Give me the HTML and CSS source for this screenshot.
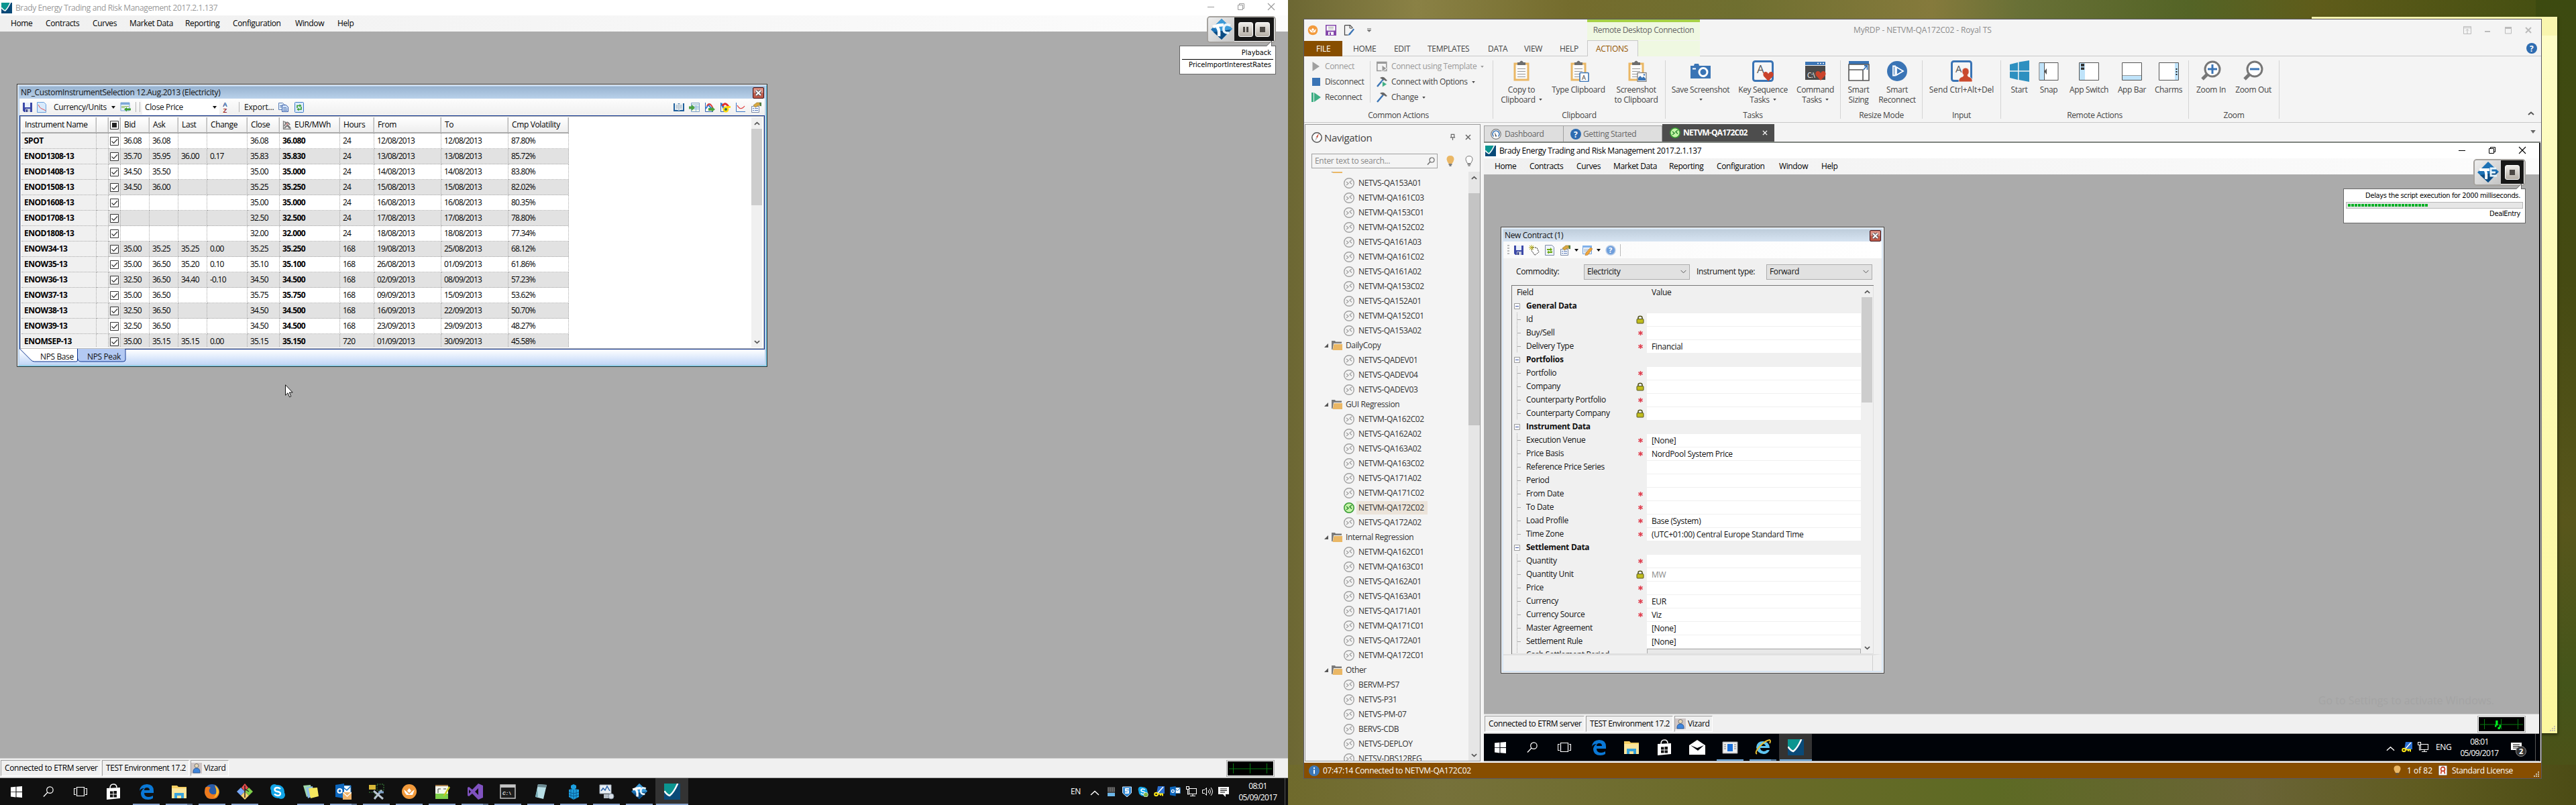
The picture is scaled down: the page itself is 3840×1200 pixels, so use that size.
FILE: index.html
```html
<!DOCTYPE html>
<html lang="en">
<head>
<meta charset="utf-8">
<title>Brady Energy Trading and Risk Management</title>
<link rel="stylesheet" href="styles.css">
</head>
<body>
<svg class="sprite" xmlns="http://www.w3.org/2000/svg">
<symbol id="brady" viewBox="0 0 16 16"><path d="M0 0h16v16H0z" fill="#0a4a78"/><path d="M0 0h13L6 12Q2 11 0 7.500z" fill="#0b9590"/><path d="M.3 7.500Q3 11.500 5.500 12 9.500 9 13.500 0" fill="none" stroke="#fff" stroke-width="1.600"/></symbol>
<symbol id="min" viewBox="0 0 12 12"><path d="M1 6.500h10" stroke="currentColor" fill="none"/></symbol>
<symbol id="max" viewBox="0 0 12 12"><path d="M1.500 3.500h7v7h-7zM3.500 3.500v-2h7v7h-2" stroke="currentColor" fill="none"/></symbol>
<symbol id="cls" viewBox="0 0 12 12"><path d="M1 1l10 10M11 1L1 11" stroke="currentColor" fill="none" stroke-width="1.100"/></symbol>
<symbol id="redx" viewBox="0 0 17 17"><rect x=".5" y=".5" width="16" height="16" rx="1.500" fill="#bd5a4a" stroke="#43161c"/><rect x="1.500" y="1.500" width="14" height="7" fill="#dc9588"/><path d="M5 5l7 7M12 5l-7 7" stroke="#4c4c55" stroke-width="4"/><path d="M5 5l7 7M12 5l-7 7" stroke="#fff" stroke-width="2.200"/></symbol>
<symbol id="save" viewBox="0 0 16 16"><path d="M1 1h14v14H3l-2-2z" fill="#3c49a8"/><path d="M4 1h8v7H4z" fill="#e9effa"/><path d="M5 10h7v5H5z" fill="#c8cede"/><path d="M6 11h2v4H6z" fill="#29327c"/></symbol>
<symbol id="curvedoc" viewBox="0 0 16 16"><path d="M1.500.5h10l3 3v12h-13z" fill="#d8eafc" stroke="#6ba0dc"/><path d="M3 4q2 5 5 6t6 3" stroke="#e45050" fill="none"/></symbol>
<symbol id="gridarrow" viewBox="0 0 16 16"><path d="M1 1h13v12H1z" fill="#eaf3fd" stroke="#7da7d8"/><path d="M1 1h13v3H1z" fill="#7da7d8"/><path d="M2 6.500h11M2 8.500h5" stroke="#8bb54f"/><path d="M6 11l4-3.500v2h6v3h-6v2z" fill="#3d9c31"/></symbol>
<symbol id="az" viewBox="0 0 10 18"><text x="1" y="8" font-family="Liberation Sans" font-weight="bold" font-size="9.500" fill="#2c5aa0">A</text><text x="1.500" y="17" font-family="Liberation Sans" font-weight="bold" font-size="9.500" fill="#9c2b2b">Z</text></symbol>
<symbol id="copy" viewBox="0 0 16 16"><path d="M1.500 1.500h6l2 2v8h-8z" fill="#e3effc" stroke="#5e7fb5"/><path d="M6.500 4.500h6l3 3v7h-9z" fill="#cfe1fa" stroke="#3b5fa8"/><path d="M8 8.500h5M8 10.500h6M8 12.500h6M3 5.500h3M3 7.500h3" stroke="#5e7fb5"/></symbol>
<symbol id="refresh" viewBox="0 0 16 16"><rect x="1.500" y=".5" width="13" height="15" rx="1" fill="#dcebfb" stroke="#3f7cc9"/><path d="M5 9V5.500h4M11 7v4H7" fill="none" stroke="#3a9d31" stroke-width="1.600"/><path d="M8.500 3l3 2.500-3 2.500zM7.500 8.500l-3 2.500 3 2.500z" fill="#3a9d31"/></symbol>
<symbol id="book" viewBox="0 0 16 16"><path d="M0 2h16v12H0z" fill="#1f5f9c"/><path d="M2 2q3-1 6 1 3-2 6-1v10q-3-1-6 1-3-2-6-1z" fill="#eef4f8"/><path d="M8 3v10M3.500 5h3M3.500 7h3M3.500 9h3M9.500 5h3M9.500 7h3M9.500 9h3" stroke="#8ca3b5"/></symbol>
<symbol id="gridin" viewBox="0 0 16 16"><path d="M3.500 1.500h12v13h-12z" fill="#f3f9ee" stroke="#7d9fc9"/><path d="M3.500 4h12M5 6.500h10M5 8.500h10M5 10.500h10M10.500 5v9" stroke="#8fb6df"/><path d="M0 6.500h4V4l5 4.500L4 13v-2.500H0z" fill="#4ba13f"/></symbol>
<symbol id="charta" viewBox="0 0 16 16"><path d="M1.500 1v13.500H13" stroke="#2f62b5" fill="none"/><path d="M2 10l4-6 3 4 4 4" stroke="#2f7bd0" stroke-width="2" fill="none"/><path d="M4 6q3-6 7 0l3 6" stroke="#e03a3a" stroke-width="2" fill="none"/><path d="M6 9h5V7l5 4-5 4v-2H6z" fill="#4ba13f"/></symbol>
<symbol id="chartb" viewBox="0 0 16 16"><path d="M1.500 1v13.500H7" stroke="#2f62b5" fill="none"/><path d="M2 2l5 9" stroke="#2f7bd0" stroke-width="3"/><path d="M4 6q4-7 9 1" stroke="#e23030" stroke-width="3" fill="none"/><circle cx="9" cy="11" r="3.200" fill="#2a7a4a" stroke="#ffd90f" stroke-width="2.500"/><path d="M10 6h6v3h-6z" fill="#ffd90f"/></symbol>
<symbol id="chartc" viewBox="0 0 16 16"><path d="M1.500 1v13.500H15" stroke="#3b78c9" fill="none"/><path d="M3 5q5 9 11 1" stroke="#e03a3a" fill="none" stroke-width="1.200"/></symbol>
<symbol id="props" viewBox="0 0 16 16"><path d="M1.500 6.500h11v9h-11z" fill="#f4f7fc" stroke="#7e8ca8"/><path d="M3 9.500h2M6 9.500h5M3 12.500h2M6 12.500h5" stroke="#5b7ab8"/><path d="M4 5l5-4h7v5l-4-1-5 3z" fill="#d8a840" stroke="#8a7030" stroke-width=".6"/><path d="M13 1h3v5h-2z" fill="#4b7a40"/></symbol>
<symbol id="chk" viewBox="0 0 13 13"><path d="M.5.5h12v12H.5z" fill="#fff" stroke="#333"/><path d="M2.500 6.500l3 3 5.500-6" fill="none" stroke="#333" stroke-width="1.200"/></symbol>
<symbol id="chksq" viewBox="0 0 13 13"><path d="M.5.5h12v12H.5z" fill="#fff" stroke="#333"/><path d="M3 3h7v7H3z" fill="#222"/></symbol>
<symbol id="graychart" viewBox="0 0 13 13"><path d="M1.500 0v12.500H13" stroke="#777" fill="none" stroke-width="1.300"/><path d="M3 1l9 10M3 8q3-10 8-2M3 11l4-4 4 4" stroke="#777" fill="none" stroke-width="1.800"/><circle cx="7" cy="5" r="1.500" fill="#d78a8a"/></symbol>
<symbol id="cursor" viewBox="0 0 12 20"><path d="M.5.7v15.500l3.500-3.400 2.600 6 2.300-1-2.600-5.800h4.900z" fill="#fff" stroke="#111"/></symbol>
<symbol id="up" viewBox="0 0 10 6"><path d="M1 5l4-3.500L9 5" fill="none" stroke="#555" stroke-width="1.900"/></symbol>
<symbol id="dn" viewBox="0 0 10 6"><path d="M1 1l4 3.500L9 1" fill="none" stroke="#555" stroke-width="1.900"/></symbol>
<symbol id="tri" viewBox="0 0 6 4"><path d="M0 0h6L3 4z" fill="currentColor"/></symbol>
<symbol id="tc" viewBox="0 0 32 32"><path d="M16 0l16 15-16 16L0 16z" fill="#1c71b5"/><path d="M16 0l16 15-12 12L4 12z" fill="#3c9bd8"/><path d="M16 18l14-2-14 15L4 20z" fill="#0c4c83"/><path d="M3 12q8-3 16-3M9 12q4 3 3 14" fill="none" stroke="#fff" stroke-width="4.500"/><path d="M29 10q-9-4-10 4t8 7" fill="none" stroke="#e8f5fc" stroke-width="3.600"/></symbol>
<symbol id="te" viewBox="0 0 32 32"><path d="M16 0l16 15-16 16L0 16z" fill="#1c71b5"/><path d="M16 18l14-2-14 15L4 20z" fill="#0c4c83"/><path d="M3 12h15M11 12q3 3 2 14" fill="none" stroke="#fff" stroke-width="4"/><path d="M28 10h-8v11h9M20 16h7" fill="none" stroke="#e8f5fc" stroke-width="2.800"/></symbol>
<symbol id="user" viewBox="0 0 16 16"><path d="M0 0h16v16H0z" fill="#cfc6c6"/><circle cx="8" cy="4.500" r="3" fill="#e8d9b8" stroke="#777"/><path d="M3 15q-.5-7 5-7t5 7z" fill="#3f86dc" stroke="#2d5c9c"/></symbol>
<symbol id="win" viewBox="0 0 16 16"><path d="M0 1.500l7-.8v7H0zM8 .6L16 0v7.600H8zM0 8.500h7v7l-7-.8zM8 8.500h8V16l-8-.8z" fill="#fff"/></symbol>
<symbol id="search" viewBox="0 0 18 18"><circle cx="11" cy="6.500" r="5" fill="none" stroke="#fff" stroke-width="1.300"/><path d="M7.500 10L1 17" stroke="#fff" stroke-width="1.400"/></symbol>
<symbol id="tview" viewBox="0 0 20 16"><path d="M4.500 1.500h11v13h-11zM3 3.500H.5v9H3M17 3.500h2.500v9H17" fill="none" stroke="#fff" stroke-width="1.200"/></symbol>
<symbol id="store" viewBox="0 0 24 24"><path d="M2 7l20-1v16L2 24z" fill="#fff"/><path d="M7 7q0-6 5-6t5 5" stroke="#fff" fill="none" stroke-width="1.500"/><path d="M7 11.500h4.500v4H7zM12.500 11H17v4.500h-4.500zM7 16.500h4.500v4H7zM12.500 16.500H17v4h-4.500z" fill="#111"/></symbol>
<symbol id="edge" viewBox="0 0 24 24"><path d="M2 11Q3 1 13 1q10 0 10 10v3H9q0 6 7 6 3 0 6-2v4q-3 2-7 2Q4 24 4 14 5 9 9 7 4 7 2 11zm7-1h8q0-4-4-4t-4 4z" fill="#0a78d6"/></symbol>
<symbol id="folder" viewBox="0 0 24 24"><path d="M1 3h8l2 2h12v17H1z" fill="#f6cf62"/><path d="M1 7h22v15H1z" fill="#fce69c"/><path d="M5 22v-8h14v8h-4v-4H9v4z" fill="#38a3dc"/></symbol>
<symbol id="firefox" viewBox="0 0 24 24"><circle cx="12" cy="12" r="11" fill="#2a5ca8"/><path d="M2 6q4-3 8 0-4 4-1 8 4 4 9 1 2-5-2-11 7 3 7 9-1 10-11 10T1 13z" fill="#ee7a1c"/><path d="M16 2q6 4 6 11-2 7-8 8 8-6 2-19z" fill="#fbc02d"/></symbol>
<symbol id="git" viewBox="0 0 24 24"><path d="M12 0l5 6-5 6-5-6z" fill="#ee4e4e"/><path d="M6 6l6 6-6 6-6-6z" fill="#78a8f8"/><path d="M18 6l6 6-6 6-6-6z" fill="#7ed04a"/><path d="M12 12l6 6-6 6-6-6z" fill="#f7d070"/><path d="M12 3v18M12 8l6 4" stroke="#222" stroke-width="1.500"/></symbol>
<symbol id="skype" viewBox="0 0 24 24"><circle cx="12" cy="12" r="10" fill="#12a5e8"/><circle cx="7" cy="7" r="6" fill="#12a5e8"/><circle cx="17" cy="17" r="6" fill="#12a5e8"/><path d="M16 8q-2-2-5-2-3.500.5-3.500 3t4 3q5 .8 4.500 3.500-.5 2.500-4 2.500-3.500-.3-5-2.500" fill="none" stroke="#fff" stroke-width="2.400"/></symbol>
<symbol id="notes" viewBox="0 0 24 24"><path d="M1 3l11-1 2 14-8 4z" fill="#9fd8a8"/><path d="M5 6l10-2 2 14-9 4z" fill="#8fc0ea"/><path d="M9 7l13-1 2 13-12 3z" fill="#f6e85e"/></symbol>
<symbol id="outlook" viewBox="0 0 24 24"><path d="M10 3h13v13H10z" fill="#fff" stroke="#0f6fc6"/><path d="M12 6l5 4 6-6" fill="none" stroke="#0f6fc6" stroke-width="1.500"/><path d="M0 2l13-2v22L0 20z" fill="#0c66bd"/><circle cx="6.500" cy="11" r="3" fill="none" stroke="#fff" stroke-width="2"/></symbol>
<symbol id="outlookm" viewBox="0 0 24 24"><use href="#outlook"/><path d="M11 13h13v11H11z" fill="#efb36a"/><path d="M11 13l6.500 6 6.500-6" stroke="#fff" fill="none" stroke-width="1.300"/></symbol>
<symbol id="tools" viewBox="0 0 24 24"><path d="M1 2h10v7H1z" fill="#d8b838"/><path d="M13 1h10v9H13zM1 13h9v9" fill="none" stroke="#3e8f3e" stroke-dasharray="2 1.500"/><path d="M8 11l14 12M20 10L9 23" stroke="#b8c4d0" stroke-width="3"/><path d="M15 13h8" stroke="#7da0c8" stroke-width="3"/></symbol>
<symbol id="royal" viewBox="0 0 24 24"><circle cx="12" cy="12" r="11" fill="#f29a3c"/><path d="M4 9l4 3 4-5 4 5 4-3-3 8H8q-3-3-4-8z" fill="#fff"/><path d="M8 11l4 4 4-4" stroke="#f29a3c" fill="none" stroke-width="1.500"/></symbol>
<symbol id="npp" viewBox="0 0 24 24"><path d="M2 3h19v20H2z" fill="#f5f8ee"/><path d="M2 15h19v8H2z" fill="#7ed04a"/><path d="M2 2h19v2H2z" fill="#a07848"/><path d="M6 8v6M6 8h4M14 8h4" stroke="#444"/><path d="M22 4l-7 12-2 4 4-3L24 6z" fill="#c8c820"/></symbol>
<symbol id="vs" viewBox="0 0 24 24"><path d="M17 0l7 3v18l-7 3-9-9-5 4-2-1V6l2-1 5 4zm0 7l-5 5 5 5zM3 9v6l3-3z" fill="#8052c0"/></symbol>
<symbol id="cmd" viewBox="0 0 24 24"><path d="M1 2h22v20H1z" fill="#1d1d1d" stroke="#c4c4c4" stroke-width="1.500"/><path d="M1 2h22v4H1z" fill="#c4c4c4"/><text x="4" y="17" font-family="Liberation Mono" font-weight="bold" font-size="8" fill="#ddd">C:\</text></symbol>
<symbol id="notebook" viewBox="0 0 24 24"><path d="M8 1l13 1-5 21-12-3z" fill="#b8dfe6"/><path d="M8 1l13 1-1 4L7 5z" fill="#6d8b93"/><path d="M4 20l3-12 1 12z" fill="#75aab4"/></symbol>
<symbol id="cubes" viewBox="0 0 24 24"><path d="M12 1l4 2v4l-4 2-4-2V3zM5 9l7-1 8 1v11l-8 4-7-4z" fill="#1da0e0"/><path d="M12 9v15M8 8v14M16 8v14M5 13l7 2 8-2M5 17l7 2 8-2" stroke="#0d5c94" fill="none"/></symbol>
<symbol id="perf" viewBox="0 0 24 24"><path d="M2 2h17v13H2z" fill="#e8eef4" stroke="#9aa5b0"/><path d="M4 11l3-4 3 3 3-6 4 7" stroke="#2a62a8" fill="none" stroke-width="1.500"/><path d="M8 16h9v6H8z" fill="#b4bcc4"/><circle cx="19" cy="19" r="4" fill="#d8dee6" stroke="#8090a0"/></symbol>
<symbol id="mail" viewBox="0 0 24 24"><path d="M0 9l12-8 12 8v14H0z" fill="#fff"/><path d="M2 9l10 4 10-4-9 8z" fill="#000308"/></symbol>
<symbol id="appwin" viewBox="0 0 24 24"><path d="M1 4h22v17H1z" fill="#eee" stroke="#999"/><path d="M8 7h8v11H8z" fill="#1a6fd8"/><path d="M3 8h3M3 11h3M3 14h3M18 8h3M18 11h3M18 14h3" stroke="#777"/></symbol>
<symbol id="ie" viewBox="0 0 24 24"><path d="M2 12Q3 3 12 3t10 10H8q0 4 5 5 3 0 5-2h4q-3 6-9 6Q3 21 2 12zm6-2h8q-.5-3-4-3t-4 3z" fill="#5fc4f0"/><path d="M3 22q-4-2 4-11T22 1q2 1 0 5" fill="none" stroke="#e9bf30" stroke-width="1.900"/></symbol>
<symbol id="chev" viewBox="0 0 14 8"><path d="M1 7l6-5.500L13 7" fill="none" stroke="#fff" stroke-width="1.400"/></symbol>
<symbol id="tower" viewBox="0 0 16 16"><path d="M3 1h11v9H3z" fill="#444"/><path d="M3 3h11M3 5h11M3 7h11" stroke="#888" stroke-dasharray="2 1"/><path d="M3 10h11v5H3z" fill="#6db8ea"/></symbol>
<symbol id="shield" viewBox="0 0 16 16"><path d="M1.500 1h13v9l-6.500 6-6.500-6z" fill="#2f86d2" stroke="#d4ebff"/><path d="M11 4H6v3h4v3H5" fill="none" stroke="#fff" stroke-width="1.800"/></symbol>
<symbol id="skypeok" viewBox="0 0 24 24"><use href="#skype"/><circle cx="18" cy="19" r="5" fill="#7cb342" stroke="#fff"/></symbol>
<symbol id="key" viewBox="0 0 16 16"><path d="M6 0h10v11H4z" fill="#2a6fd0"/><path d="M14 1L6 10" stroke="#fff" stroke-width="1.500"/><circle cx="3.500" cy="12" r="2.300" fill="none" stroke="#ffe818" stroke-width="2"/><path d="M6 11.500h7v3M10 11v3" stroke="#ffe818" stroke-width="2" fill="none"/></symbol>
<symbol id="net" viewBox="0 0 16 16"><path d="M4.500 3.500h11v8h-11zM10 12v3M6 14.500h8M.5.5h4v4h-4zM2.500 5v7h2" fill="none" stroke="#fff" stroke-width="1.100"/></symbol>
<symbol id="vol" viewBox="0 0 16 16"><path d="M.5 5.500h3l3-3v11l-3-3h-3zM9 6q1.500 2 0 4M11 4q3 4 0 8M13 2q5 6 0 12" fill="none" stroke="#fff"/></symbol>
<symbol id="msg" viewBox="0 0 16 16"><path d="M0 1h16v11h-5v4l-4-4H0z" fill="#fff"/><path d="M3 4h10M3 6.500h10M3 9h7" stroke="#111" stroke-width="1.200"/></symbol>
<symbol id="mon" viewBox="0 0 64 20"><path d="M0 10h64M6.500 2v15M31.500 2v15M56.500 2v15" stroke="#067a10" fill="none"/></symbol>
<symbol id="blip" viewBox="0 0 8 12"><path d="M0 6h1V0h3v9h2V6h2v4H7v2H4V7H2v2H0z" fill="#00f020"/></symbol>
<symbol id="rdp" viewBox="0 0 16 16"><circle cx="8" cy="8" r="7.300" fill="#f4f4f4" stroke="#a0a0a0" stroke-width="1.400"/><path d="M4 6l3 2.500L4 11M12 4L9 6.500 12 9.500" fill="none" stroke="#a0a0a0" stroke-width="1.300"/></symbol>
<symbol id="rdpg" viewBox="0 0 16 16"><circle cx="8" cy="8" r="7.200" fill="#c5f5a8" stroke="#3a9b35" stroke-width="1.600"/><path d="M4 6l3 2.500L4 11M12 4L9 6.500 12 9.500" fill="none" stroke="#2d8a32" stroke-width="1.500"/></symbol>
<symbol id="fold" viewBox="0 0 16 16"><path d="M0 1h5l1 1.500h9V5H3L1.500 14H0z" fill="#7a7a7a"/><path d="M3.500 6H16v9H1.500z" fill="#eab765"/></symbol>
<symbol id="exp" viewBox="0 0 6 6"><path d="M6 0v6H0z" fill="#555"/></symbol>
<symbol id="clip" viewBox="0 0 32 32"><path d="M6 5h20v24H6z" fill="#fafafa" stroke="#eab765" stroke-width="3"/><path d="M10 3h3q3-5 6 0h3v4H10z" fill="#6d6d6d"/><path d="M10 12.500h12M10 16.500h12M10 20.500h12M10 24.500h12" stroke="#999"/></symbol>
<symbol id="clipA" viewBox="0 0 32 32"><use href="#clip"/><rect x="18" y="18.500" width="13" height="13" rx="1" fill="#fff" stroke="#3a74b5" stroke-width="1.600"/><text x="21" y="28.500" font-family="Open Sans" font-size="9.500" fill="#333">A</text></symbol>
<symbol id="clipS" viewBox="0 0 32 32"><use href="#clip"/><rect x="18" y="18.500" width="13" height="13" fill="#fff" stroke="#777" stroke-width="1.200"/><path d="M19 30v-4l3-3 3 3 2-2 3 3v3z" fill="#3a74b5"/><circle cx="28" cy="21.500" r="1.300" fill="#3a74b5"/></symbol>
<symbol id="camera" viewBox="0 0 32 32"><path d="M1 8h5l1-3h6l1 3h17v19H1z" fill="#3a74b5"/><circle cx="20" cy="17.500" r="6" fill="none" stroke="#fff" stroke-width="3"/><path d="M4 12.500h5" stroke="#fff" stroke-width="2"/></symbol>
<symbol id="heart" viewBox="0 0 16 14"><path d="M8 14L1 6.500Q-1 1.500 3.500 0 6.500-.2 8 3 9.500-.2 12.500 0 17 1.500 15 6.500z" fill="#ca432b"/></symbol>
<symbol id="keyseq" viewBox="0 0 32 32"><rect x="1.500" y="1.500" width="29" height="29" rx="3" fill="#f6f6f6" stroke="#3a74b5" stroke-width="3"/><text x="7" y="19" font-family="Open Sans" font-size="17" fill="#555">A</text><use href="#heart" x="16" y="17" width="16" height="14"/></symbol>
<symbol id="command" viewBox="0 0 32 32"><path d="M1 2h30v5H1z" fill="#3a74b5"/><path d="M1 8h30v21H1z" fill="#4a4a4a"/><path d="M19 4.500h2M23 4.500h2M27 4.500h2" stroke="#fff" stroke-width="1.500"/><text x="4" y="26" font-family="Open Sans" font-size="10" fill="#fff">C:\</text><use href="#heart" x="16" y="16" width="16" height="14"/></symbol>
<symbol id="sizing" viewBox="0 0 32 32"><path d="M1 1h30v5H1z" fill="#3a74b5"/><path d="M1 6h30v24H1zM1 14h21v16" fill="#fff" stroke="#555" stroke-width="1.600"/><path d="M23 14l5-6M24 8h4.500v6" stroke="#3a74b5" stroke-width="1.800" fill="none"/></symbol>
<symbol id="reconn" viewBox="0 0 32 32"><circle cx="16" cy="16" r="15" fill="#3a74b5"/><path d="M10 8.500h3v14h-3zM15 10l10 6-10 6z" fill="#3a74b5" stroke="#fff" stroke-width="1.800"/></symbol>
<symbol id="cad" viewBox="0 0 32 32"><rect x="1.500" y="1.500" width="29" height="29" rx="3" fill="#f6f6f6" stroke="#3a74b5" stroke-width="3"/><text x="7" y="18" font-family="Open Sans" font-size="15" fill="#555">A</text><path d="M12 32q-1-6 6-8l1-2q-3-3-2-7 1-4 5-4t5 4q1 4-2 7l1 2q7 2 6 8z" fill="#ca4a2e" stroke="#f6f6f6" stroke-width=".8"/></symbol>
<symbol id="start" viewBox="0 0 32 32"><path d="M2 6l12-3v12.300H2zM15.500 2.500L31 0v15.300H15.500zM2 16.800h12V29L2 26zM15.500 16.800H31V32l-15.500-3z" fill="#2e90c0"/></symbol>
<symbol id="snap" viewBox="0 0 32 32"><path d="M2 3.500h28v26H2z" fill="#fff" stroke="#555"/><path d="M2.500 4h6.500v25H2.500z" fill="#bfe3fa"/><path d="M9.500 4v25" stroke="#555"/><path d="M13 12v9l-4-4.500z" fill="#555"/></symbol>
<symbol id="aswitch" viewBox="0 0 32 32"><path d="M1.500 3.500h29v26h-29z" fill="#fff" stroke="#555"/><path d="M2 4h8v25H2z" fill="#bfe3fa"/><path d="M4 5h5v4H4zM4 10.500h5v3.500H4z" fill="#333"/></symbol>
<symbol id="abar" viewBox="0 0 32 32"><path d="M1.500 3.500h29v26h-29z" fill="#fff" stroke="#555"/><path d="M2 23h28v6H2z" fill="#bfe3fa"/><path d="M2 22.500h28" stroke="#999"/></symbol>
<symbol id="charms" viewBox="0 0 32 32"><path d="M1.500 3.500h29v26h-29z" fill="#fff" stroke="#555"/><path d="M25 4h5v25h-5z" fill="#bfe3fa"/><path d="M26.500 12h2v2h-2zM26.500 16h2v2h-2zM26.500 20h2v2h-2z" fill="#222"/></symbol>
<symbol id="zin" viewBox="0 0 32 32"><path d="M10 21L3 28" stroke="#777" stroke-width="5"/><circle cx="18" cy="13" r="11" fill="#fff" stroke="#777" stroke-width="3"/><path d="M18 6v14M11 13h14" stroke="#3a74b5" stroke-width="3"/></symbol>
<symbol id="zout" viewBox="0 0 32 32"><path d="M10 21L3 28" stroke="#777" stroke-width="5"/><circle cx="18" cy="13" r="11" fill="#fff" stroke="#777" stroke-width="3"/><path d="M11 13h14" stroke="#3a74b5" stroke-width="3"/></symbol>
<symbol id="play" viewBox="0 0 16 16"><path d="M2.500 1l10.500 7-10.500 7z" fill="#a0a0a0"/></symbol>
<symbol id="stop" viewBox="0 0 16 16"><path d="M2 2h12v12H2z" fill="#3a74b5"/></symbol>
<symbol id="repl" viewBox="0 0 16 16"><path d="M1 1h3v14H1zM5 1l10 7-10 7z" fill="#3fae84"/></symbol>
<symbol id="tmpl" viewBox="0 0 16 16"><path d="M.8 1.500h14v13h-14z" fill="none" stroke="#999" stroke-width="1.600"/><path d="M1 1h14v3H1z" fill="#999"/><path d="M8 6l7 5-7 5z" fill="#999" stroke="#f4f4f4"/></symbol>
<symbol id="hammer" viewBox="0 0 16 16"><path d="M5 2q5-3 8 1l3 3-2 1-3-2-1 1-2-2z" fill="#666"/><path d="M9.500 5L1 15" stroke="#3a74b5" stroke-width="2.400"/></symbol>
<symbol id="hammerp" viewBox="0 0 16 16"><use href="#hammer"/><path d="M8.500 7l7 4.500-7 4.500z" fill="#3fae84" stroke="#f4f4f4" stroke-width=".7"/></symbol>
<symbol id="qsave" viewBox="0 0 16 16"><path d="M.8.8h14.400v14.400H.8z" fill="#fff" stroke="#8448ab" stroke-width="1.600"/><path d="M0 8.500h16V16H0z" fill="#8448ab"/><path d="M4 10.500h8V15H4z" fill="#fff"/><path d="M6 11.500h2V15H6z" fill="#8448ab"/><path d="M4 3.500h8M4 6h8" stroke="#999"/></symbol>
<symbol id="qpage" viewBox="0 0 16 16"><path d="M1.500.7h8l4 4M1.500.7v14.500h5" fill="none" stroke="#444" stroke-width="1.200"/><path d="M9 1v4h4" fill="none" stroke="#444"/><path d="M14.500 5.500l-7 8-1 2.500 3-1 6.500-8z" fill="#3a74b5"/></symbol>
<symbol id="q" viewBox="0 0 16 16"><circle cx="8" cy="8" r="8" fill="#2e6cb0"/><text x="4.900" y="12.500" font-family="Open Sans" font-weight="bold" font-size="12" fill="#fff">?</text></symbol>
<symbol id="compass" viewBox="0 0 16 16"><circle cx="8" cy="8" r="7.200" fill="#fff" stroke="#555" stroke-width="1.500"/><path d="M11 2L7 7l2 1.500z" fill="#c8402a"/><path d="M5 14l4-5.500L7 7z" fill="#bbb"/></symbol>
<symbol id="gauge" viewBox="0 0 16 16"><circle cx="8" cy="8" r="7.300" fill="#fff" stroke="#777" stroke-width="1.200"/><path d="M4.500 11.500A5 5 0 1 1 11.500 11.500" fill="none" stroke="#3a74b5" stroke-width="1.600"/><path d="M6 5l3.500 6.500H7z" fill="#555"/></symbol>
<symbol id="pin" viewBox="0 0 10 12"><path d="M2.500 1.500h5v5h-5zM1 6.500h8M5 7v4" fill="none" stroke="#666" stroke-width="1.300"/></symbol>
<symbol id="bulb" viewBox="0 0 12 16"><path d="M6 0q5.500 0 5.500 5.500Q11 9 8.500 12h-5Q1 9 .5 5.500.500 0 6 0z" fill="#eab765"/><path d="M3.500 13h5M4.500 15h3" stroke="#555" stroke-width="1.400"/></symbol>
<symbol id="bulbo" viewBox="0 0 12 16"><path d="M6 .7q5 0 5 5Q10.500 8.500 8.500 11.500h-5Q1.500 8.500 1 5.700 1 .7 6 .7z" fill="#fff" stroke="#777"/><path d="M3.500 13h5M4.500 15h3" stroke="#777" stroke-width="1.400"/></symbol>
<symbol id="mag" viewBox="0 0 12 12"><circle cx="7.500" cy="4.500" r="3.500" fill="none" stroke="#666" stroke-width="1.200"/><path d="M5 7L1 11.500" stroke="#666" stroke-width="1.300"/></symbol>
<symbol id="info" viewBox="0 0 16 16"><circle cx="8" cy="8" r="8" fill="#3c78b8"/><path d="M7 6.500h2v6H7zM7 3h2v2H7z" fill="#fff"/></symbol>
<symbol id="lic" viewBox="0 0 13 15"><rect x=".5" y=".5" width="12" height="14" rx="1" fill="#fff" stroke="#9a9a9a"/><circle cx="6.500" cy="5.500" r="3" fill="none" stroke="#ca432b" stroke-width="1.800"/><path d="M4.500 8L3.500 12.500M8.500 8l1 4.500" stroke="#ca432b" stroke-width="1.700"/></symbol>
<symbol id="grip" viewBox="0 0 8 8"><path d="M6 0h2v2H6zM3 3h2v2H3zM6 3h2v2H6zM0 6h2v2H0zM3 6h2v2H3zM6 6h2v2H6z" fill="#c9c2b0"/></symbol>
<symbol id="newdoc" viewBox="0 0 16 16"><path d="M6 3.500l6 1 3 6-6 5-5-7z" fill="#fff" stroke="#222" stroke-dasharray="2 1"/><path d="M4 0v8M0 4h8M1 1l6 6M7 1L1 7" stroke="#b8b020"/></symbol>
<symbol id="grefresh" viewBox="0 0 16 16"><path d="M1.500.5h10l3 3v12h-13z" fill="#eef3f8" stroke="#7e8ca8"/><path d="M4 8V6h5V4l3 3-3 3V8zM12 9v3H7v1.500L4 11l3-2.500V10h3z" fill="#6cab10"/></symbol>
<symbol id="edit" viewBox="0 0 16 16"><path d="M1.500 1.500h13v12h-13z" fill="#eef5fd" stroke="#6d9cd8"/><path d="M1 1h14v3H1z" fill="#7fb0ea"/><path d="M3 6.500h9M3 8.500h6M3 10.500h5" stroke="#a8bcd0"/><path d="M13 4l3 2-7 9-4 1 1-4z" fill="#efa63c" stroke="#a86a20" stroke-width=".5"/></symbol>
<symbol id="helpb" viewBox="0 0 16 16"><circle cx="8" cy="8" r="7" fill="#6f9fdc" stroke="#b9cde8" stroke-width="1.500"/><text x="5" y="12" font-family="Open Sans" font-weight="bold" font-size="11" fill="#fff">?</text></symbol>
<symbol id="lock" viewBox="0 0 12 13"><path d="M3 6V3.500Q3 1.200 6 1.200T9 3.500V6" fill="none" stroke="#555520" stroke-width="1.600"/><rect x="1" y="5.500" width="10" height="6.500" rx="1" fill="#c0bc1c" stroke="#555520"/></symbol>
<symbol id="star" viewBox="0 0 10 10"><path d="M5 1v8M1.500 3l7 4M8.500 3l-7 4" stroke="#e04050" stroke-width="1.700"/></symbol>
<symbol id="minus" viewBox="0 0 9 9"><path d="M.5.5h8v8h-8z" fill="#fff" stroke="#999"/><path d="M2 4.500h5" stroke="#3a4fa0"/></symbol>
<symbol id="drop" viewBox="0 0 10 6"><path d="M.7.7L5 5 9.300.7" fill="none" stroke="#555" stroke-width="1.100"/></symbol>
<symbol id="tail" viewBox="0 0 10 8"><path d="M0 8L7 1v7z" fill="#fff"/><path d="M0 7.500L7.500 0v8" fill="none" stroke="#666"/></symbol>
</svg>

<div class="desk">
<section class="screen left">
  <header class="title dim"><svg class="logo"><use href="#brady"/></svg><span class="cap">Brady Energy Trading and Risk Management 2017.2.1.137</span>
    <div class="wc"><svg><use href="#min"/></svg><svg><use href="#max"/></svg><svg><use href="#cls"/></svg></div></header>
  <nav class="menu"><span>Home</span><span>Contracts</span><span>Curves</span><span>Market Data</span><span>Reporting</span><span>Configuration</span><span>Window</span><span>Help</span></nav>
  <main class="mdi">
    <div class="win prices">
      <div class="wtitle"><span>NP_CustomInstrumentSelection 12.Aug.2013 (Electricity)</span><svg class="x17"><use href="#redx"/></svg></div>
      <div class="tools">
        <svg class="i16"><use href="#save"/></svg><svg class="i16 s1"><use href="#curvedoc"/></svg><span class="units">Currency/Units</span><svg class="tri"><use href="#tri"/></svg><svg class="i16 s2"><use href="#gridarrow"/></svg><i class="sep sep1"></i><i class="sep sep2"></i><div class="combo0"><span>Close Price</span><svg class="tri"><use href="#tri"/></svg></div><svg class="az"><use href="#az"/></svg><i class="sep sep3"></i><span class="export">Export...</span><svg class="i16 s3"><use href="#copy"/></svg><svg class="i16 s4"><use href="#refresh"/></svg>
        <div class="rt"><svg class="i16"><use href="#book"/></svg><svg class="i16"><use href="#gridin"/></svg><svg class="i16"><use href="#charta"/></svg><svg class="i16"><use href="#chartb"/></svg><svg class="i16"><use href="#chartc"/></svg><svg class="i16"><use href="#props"/></svg></div>
      </div>
      <div class="gridbox">
        <div class="table">
          <div class="row head"><span>Instrument Name</span><span></span><span><svg class="ck"><use href="#chksq"/></svg></span><span>Bid</span><span>Ask</span><span>Last</span><span>Change</span><span>Close</span><span><svg class="gc"><use href="#graychart"/></svg>EUR/MWh</span><span>Hours</span><span>From</span><span>To</span><span>Cmp Volatility</span></div>
          <div class="row"><span>SPOT</span><span></span><span><svg class="ck"><use href="#chk"/></svg></span><span>36.08</span><span>36.08</span><span></span><span></span><span>36.08</span><span>36.080</span><span>24</span><span>12/08/2013</span><span>12/08/2013</span><span>87.80%</span></div>
          <div class="row"><span>ENOD1308-13</span><span></span><span><svg class="ck"><use href="#chk"/></svg></span><span>35.70</span><span>35.95</span><span>36.00</span><span>0.17</span><span>35.83</span><span>35.830</span><span>24</span><span>13/08/2013</span><span>13/08/2013</span><span>85.72%</span></div>
          <div class="row"><span>ENOD1408-13</span><span></span><span><svg class="ck"><use href="#chk"/></svg></span><span>34.50</span><span>35.50</span><span></span><span></span><span>35.00</span><span>35.000</span><span>24</span><span>14/08/2013</span><span>14/08/2013</span><span>83.80%</span></div>
          <div class="row"><span>ENOD1508-13</span><span></span><span><svg class="ck"><use href="#chk"/></svg></span><span>34.50</span><span>36.00</span><span></span><span></span><span>35.25</span><span>35.250</span><span>24</span><span>15/08/2013</span><span>15/08/2013</span><span>82.02%</span></div>
          <div class="row"><span>ENOD1608-13</span><span></span><span><svg class="ck"><use href="#chk"/></svg></span><span></span><span></span><span></span><span></span><span>35.00</span><span>35.000</span><span>24</span><span>16/08/2013</span><span>16/08/2013</span><span>80.35%</span></div>
          <div class="row"><span>ENOD1708-13</span><span></span><span><svg class="ck"><use href="#chk"/></svg></span><span></span><span></span><span></span><span></span><span>32.50</span><span>32.500</span><span>24</span><span>17/08/2013</span><span>17/08/2013</span><span>78.80%</span></div>
          <div class="row"><span>ENOD1808-13</span><span></span><span><svg class="ck"><use href="#chk"/></svg></span><span></span><span></span><span></span><span></span><span>32.00</span><span>32.000</span><span>24</span><span>18/08/2013</span><span>18/08/2013</span><span>77.34%</span></div>
          <div class="row"><span>ENOW34-13</span><span></span><span><svg class="ck"><use href="#chk"/></svg></span><span>35.00</span><span>35.25</span><span>35.25</span><span>0.00</span><span>35.25</span><span>35.250</span><span>168</span><span>19/08/2013</span><span>25/08/2013</span><span>68.12%</span></div>
          <div class="row"><span>ENOW35-13</span><span></span><span><svg class="ck"><use href="#chk"/></svg></span><span>35.00</span><span>36.50</span><span>35.20</span><span>0.10</span><span>35.10</span><span>35.100</span><span>168</span><span>26/08/2013</span><span>01/09/2013</span><span>61.86%</span></div>
          <div class="row"><span>ENOW36-13</span><span></span><span><svg class="ck"><use href="#chk"/></svg></span><span>32.50</span><span>36.50</span><span>34.40</span><span>-0.10</span><span>34.50</span><span>34.500</span><span>168</span><span>02/09/2013</span><span>08/09/2013</span><span>57.23%</span></div>
          <div class="row"><span>ENOW37-13</span><span></span><span><svg class="ck"><use href="#chk"/></svg></span><span>35.00</span><span>36.50</span><span></span><span></span><span>35.75</span><span>35.750</span><span>168</span><span>09/09/2013</span><span>15/09/2013</span><span>53.62%</span></div>
          <div class="row"><span>ENOW38-13</span><span></span><span><svg class="ck"><use href="#chk"/></svg></span><span>32.50</span><span>36.50</span><span></span><span></span><span>34.50</span><span>34.500</span><span>168</span><span>16/09/2013</span><span>22/09/2013</span><span>50.70%</span></div>
          <div class="row"><span>ENOW39-13</span><span></span><span><svg class="ck"><use href="#chk"/></svg></span><span>32.50</span><span>36.50</span><span></span><span></span><span>34.50</span><span>34.500</span><span>168</span><span>23/09/2013</span><span>29/09/2013</span><span>48.27%</span></div>
          <div class="row"><span>ENOMSEP-13</span><span></span><span><svg class="ck"><use href="#chk"/></svg></span><span>35.00</span><span>35.15</span><span>35.15</span><span>0.00</span><span>35.15</span><span>35.150</span><span>720</span><span>01/09/2013</span><span>30/09/2013</span><span>45.58%</span></div>
        </div>
        <div class="sb"><svg><use href="#up"/></svg><div class="thumb t114"></div><svg class="end"><use href="#dn"/></svg></div>
      </div>
      <div class="sheets"><svg class="shape" viewBox="0 0 162 20"><path d="M0 0l17 17q2 2 5 2h62q2 0 2-2V0z" fill="#fff"/><path d="M86.500 0v15q1 4 5 4h62q4 0 4-3V0z" fill="#b3c9f3"/><path d="M.5 0l17 17q2 2 5 2h62q2 0 2-2V0M86.500 14q1 5 5 5h63q3.500 0 3.500-3V0" fill="none" stroke="#0a3290"/></svg><span class="sh1">NPS Base</span><span class="sh2">NPS Peak</span></div>
    </div>
    <svg class="cursor"><use href="#cursor"/></svg>
  </main>
  <footer class="status"><span class="p1">Connected to ETRM server</span><span class="p2">TEST Environment 17.2</span><span class="p3"><svg class="i16"><use href="#user"/></svg>Vizard</span><div class="monitor"><svg><use href="#mon"/></svg></div></footer>
  <div class="task">
    <i class="st"><svg class="w16"><use href="#win"/></svg></i><i class="st"><svg class="w18"><use href="#search"/></svg></i><i class="st"><svg class="w20"><use href="#tview"/></svg></i>
    <i><svg><use href="#store"/></svg></i><i class="u"><svg><use href="#edge"/></svg></i><i class="u d"><svg><use href="#folder"/></svg></i><i class="u"><svg><use href="#firefox"/></svg></i><i class="u"><svg><use href="#git"/></svg></i><i><svg><use href="#skype"/></svg></i><i class="u"><svg><use href="#notes"/></svg></i><i class="u d"><svg><use href="#outlookm"/></svg></i><i class="u"><svg><use href="#tools"/></svg></i><i class="u"><svg><use href="#royal"/></svg></i><i class="u"><svg><use href="#npp"/></svg></i><i class="u d"><svg><use href="#vs"/></svg></i><i class="u"><svg><use href="#cmd"/></svg></i><i class="u"><svg><use href="#notebook"/></svg></i><i class="u"><svg><use href="#cubes"/></svg></i><i class="u"><svg><use href="#perf"/></svg></i><i class="u"><svg><use href="#tc"/></svg></i><i class="u on"><svg><use href="#brady"/></svg></i>
    <div class="tray"><span class="en">EN</span><svg class="chev"><use href="#chev"/></svg><svg class="i16"><use href="#tower"/></svg><svg class="i16"><use href="#shield"/></svg><svg class="i16"><use href="#skypeok"/></svg><svg class="i16"><use href="#key"/></svg><svg class="i16"><use href="#outlook"/></svg><svg class="i16"><use href="#net"/></svg><svg class="i16"><use href="#vol"/></svg><svg class="i16"><use href="#msg"/></svg><div class="clock"><span>08:01</span><span>05/09/2017</span></div></div>
  </div>
  <div class="player p-left"><div class="lg"><svg><use href="#tc"/></svg></div><div class="btns"><b><i class="pause"></i></b><b><i class="sq"></i></b></div></div>
  <div class="tip tip-left"><svg class="tail"><use href="#tail"/></svg><span>Playback</span><hr><span>PriceImportInterestRates</span></div>
</section>

<section class="screen right">
  <div class="sticky"><svg><use href="#grip"/></svg></div>
  <div class="royal">
    <div class="rtitle">
      <div class="qat"><svg class="i16"><use href="#royal"/></svg><svg class="i16"><use href="#qsave"/></svg><svg class="i16"><use href="#qpage"/></svg><svg class="qd" viewBox="0 0 6 6"><path d="M0 .5h6M0 2.500h6L3 5.500z" stroke="#777" fill="#777" stroke-width=".8"/></svg></div>
      <span class="ctx">Remote Desktop Connection</span>
      <span class="rcap">MyRDP - NETVM-QA172C02 - Royal TS</span>
      <div class="rwc"><svg viewBox="0 0 12 12"><path d="M.5.5h11v11H.5zM1 2.500h10M6 11V5M4 6.500l2-2 2 2" fill="none" stroke="#bbb"/></svg><svg viewBox="0 0 12 12"><path d="M2 8h8" stroke="#bbb" stroke-width="2"/></svg><svg viewBox="0 0 12 12"><path d="M1.500 2v9h9V2" fill="none" stroke="#bbb"/><path d="M1 2.500h10" stroke="#bbb" stroke-width="3"/></svg><svg viewBox="0 0 12 12"><path d="M2 2l8 8M10 2l-8 8" stroke="#bbb" stroke-width="2"/></svg></div>
    </div>
    <div class="rtabs"><span class="file">FILE</span><span>HOME</span><span>EDIT</span><span>TEMPLATES</span><span>DATA</span><span>VIEW</span><span>HELP</span><span class="act">ACTIONS</span><span class="ctxb"></span><svg class="i16 hq"><use href="#q"/></svg></div>
    <div class="ribbon">
      <div class="grp g1"><div class="cols">
        <div class="c1"><span class="off"><svg class="i16"><use href="#play"/></svg>Connect</span><span><svg class="i16"><use href="#stop"/></svg>Disconnect</span><span><svg class="i16"><use href="#repl"/></svg>Reconnect</span></div>
        <div class="c2"><span class="off"><svg class="i16"><use href="#tmpl"/></svg>Connect using Template<svg class="dt"><use href="#tri"/></svg></span><span><svg class="i16"><use href="#hammerp"/></svg>Connect with Options<svg class="dt"><use href="#tri"/></svg></span><span><svg class="i16"><use href="#hammer"/></svg>Change<svg class="dt"><use href="#tri"/></svg></span></div></div><label>Common Actions</label></div>
      <div class="grp g2"><div class="big"><a class="w84"><svg><use href="#clip"/></svg><span>Copy to</span><span>Clipboard<svg class="dt"><use href="#tri"/></svg></span></a><a class="w86"><svg><use href="#clipA"/></svg><span>Type Clipboard</span></a><a class="w86"><svg><use href="#clipS"/></svg><span>Screenshot</span><span>to Clipboard</span></a></div><label>Clipboard</label></div>
      <div class="grp g3"><div class="big"><a class="w104"><svg><use href="#camera"/></svg><span>Save Screenshot</span><span><svg class="dt solo"><use href="#tri"/></svg></span></a><a class="w82"><svg><use href="#keyseq"/></svg><span>Key Sequence</span><span>Tasks<svg class="dt"><use href="#tri"/></svg></span></a><a class="w74"><svg><use href="#command"/></svg><span>Command</span><span>Tasks<svg class="dt"><use href="#tri"/></svg></span></a></div><label>Tasks</label></div>
      <div class="grp g4"><div class="big"><a class="w53"><svg><use href="#sizing"/></svg><span>Smart</span><span>Sizing</span></a><a class="w62"><svg><use href="#reconn"/></svg><span>Smart</span><span>Reconnect</span></a></div><label>Resize Mode</label></div>
      <div class="grp g5"><div class="big"><a class="w116"><svg><use href="#cad"/></svg><span class="wide">Send Ctrl+Alt+Del</span></a></div><label>Input</label></div>
      <div class="grp g6"><div class="big"><a class="w54"><svg><use href="#start"/></svg><span>Start</span></a><a class="w34"><svg><use href="#snap"/></svg><span>Snap</span></a><a class="w86"><svg><use href="#aswitch"/></svg><span>App Switch</span></a><a class="w42"><svg><use href="#abar"/></svg><span>App Bar</span></a><a class="w67"><svg><use href="#charms"/></svg><span>Charms</span></a></div><label>Remote Actions</label></div>
      <div class="grp g7"><div class="big"><a class="w66"><svg><use href="#zin"/></svg><span>Zoom In</span></a><a class="w60"><svg><use href="#zout"/></svg><span>Zoom Out</span></a></div><label>Zoom</label></div>
      <svg class="collapse"><use href="#up"/></svg>
    </div>
    <div class="body">
      <aside class="nav">
        <div class="nh"><svg class="i16"><use href="#compass"/></svg><b>Navigation</b><svg class="pn"><use href="#pin"/></svg><svg class="nx" viewBox="0 0 9 9"><path d="M1 1l7 7M8 1L1 8" stroke="#666" stroke-width="1.500"/></svg></div>
        <div class="ns"><div class="box"><span>Enter text to search...</span><svg><use href="#mag"/></svg></div><svg class="bl"><use href="#bulb"/></svg><svg class="bl b2"><use href="#bulbo"/></svg></div>
        <div class="treebox">
          <div class="tree">
            <p class="f"><svg class="ex"><use href="#exp"/></svg><svg class="i16"><use href="#fold"/></svg></p>
            <p><svg class="i16"><use href="#rdp"/></svg>NETVS-QA153A01</p><p><svg class="i16"><use href="#rdp"/></svg>NETVM-QA161C03</p><p><svg class="i16"><use href="#rdp"/></svg>NETVM-QA153C01</p><p><svg class="i16"><use href="#rdp"/></svg>NETVM-QA152C02</p><p><svg class="i16"><use href="#rdp"/></svg>NETVS-QA161A03</p><p><svg class="i16"><use href="#rdp"/></svg>NETVM-QA161C02</p><p><svg class="i16"><use href="#rdp"/></svg>NETVS-QA161A02</p><p><svg class="i16"><use href="#rdp"/></svg>NETVM-QA153C02</p><p><svg class="i16"><use href="#rdp"/></svg>NETVS-QA152A01</p><p><svg class="i16"><use href="#rdp"/></svg>NETVM-QA152C01</p><p><svg class="i16"><use href="#rdp"/></svg>NETVS-QA153A02</p>
            <p class="f"><svg class="ex"><use href="#exp"/></svg><svg class="i16"><use href="#fold"/></svg>DailyCopy</p>
            <p><svg class="i16"><use href="#rdp"/></svg>NETVS-QADEV01</p><p><svg class="i16"><use href="#rdp"/></svg>NETVS-QADEV04</p><p><svg class="i16"><use href="#rdp"/></svg>NETVS-QADEV03</p>
            <p class="f"><svg class="ex"><use href="#exp"/></svg><svg class="i16"><use href="#fold"/></svg>GUI Regression</p>
            <p><svg class="i16"><use href="#rdp"/></svg>NETVM-QA162C02</p><p><svg class="i16"><use href="#rdp"/></svg>NETVS-QA162A02</p><p><svg class="i16"><use href="#rdp"/></svg>NETVS-QA163A02</p><p><svg class="i16"><use href="#rdp"/></svg>NETVM-QA163C02</p><p><svg class="i16"><use href="#rdp"/></svg>NETVS-QA171A02</p><p><svg class="i16"><use href="#rdp"/></svg>NETVM-QA171C02</p><p class="sel"><svg class="i16"><use href="#rdpg"/></svg><em>NETVM-QA172C02</em></p><p><svg class="i16"><use href="#rdp"/></svg>NETVS-QA172A02</p>
            <p class="f"><svg class="ex"><use href="#exp"/></svg><svg class="i16"><use href="#fold"/></svg>Internal Regression</p>
            <p><svg class="i16"><use href="#rdp"/></svg>NETVM-QA162C01</p><p><svg class="i16"><use href="#rdp"/></svg>NETVM-QA163C01</p><p><svg class="i16"><use href="#rdp"/></svg>NETVS-QA162A01</p><p><svg class="i16"><use href="#rdp"/></svg>NETVS-QA163A01</p><p><svg class="i16"><use href="#rdp"/></svg>NETVS-QA171A01</p><p><svg class="i16"><use href="#rdp"/></svg>NETVM-QA171C01</p><p><svg class="i16"><use href="#rdp"/></svg>NETVS-QA172A01</p><p><svg class="i16"><use href="#rdp"/></svg>NETVM-QA172C01</p>
            <p class="f"><svg class="ex"><use href="#exp"/></svg><svg class="i16"><use href="#fold"/></svg>Other</p>
            <p><svg class="i16"><use href="#rdp"/></svg>BERVM-PS7</p><p><svg class="i16"><use href="#rdp"/></svg>NETVS-P31</p><p><svg class="i16"><use href="#rdp"/></svg>NETVS-PM-07</p><p><svg class="i16"><use href="#rdp"/></svg>BERVS-CDB</p><p><svg class="i16"><use href="#rdp"/></svg>NETVS-DEPLOY</p><p><svg class="i16"><use href="#rdp"/></svg>NETSV-DBS12REG</p>
          </div>
          <div class="sb tsb"><svg><use href="#up"/></svg><div class="thumb t346"></div><svg class="end"><use href="#dn"/></svg></div>
        </div>
      </aside>
      <div class="docs">
        <div class="dtabs"><span class="d1"><svg class="i16"><use href="#gauge"/></svg>Dashboard</span><span class="d2"><svg class="i16"><use href="#q"/></svg>Getting Started</span><span class="d3"><svg class="i16"><use href="#rdpg"/></svg>NETVM-QA172C02<svg class="dx" viewBox="0 0 9 9"><path d="M1 1l7 7M8 1L1 8" stroke="#fff" stroke-width="1.500"/></svg></span><svg class="dd"><use href="#tri"/></svg></div>
        <div class="remote">
          <header class="title"><svg class="logo"><use href="#brady"/></svg><span class="cap">Brady Energy Trading and Risk Management 2017.2.1.137</span>
            <div class="wc"><svg><use href="#min"/></svg><svg><use href="#max"/></svg><svg><use href="#cls"/></svg></div></header>
          <nav class="menu"><span>Home</span><span>Contracts</span><span>Curves</span><span>Market Data</span><span>Reporting</span><span>Configuration</span><span>Window</span><span>Help</span></nav>
          <main class="mdi">
            <span class="wm">Go to Settings to activate Windows.</span>
            <div class="win contract">
              <div class="wtitle"><span>New Contract (1)</span><svg class="x17"><use href="#redx"/></svg></div>
              <div class="ctools"><i class="grip"></i><svg class="i16"><use href="#save"/></svg><svg class="i16"><use href="#newdoc"/></svg><svg class="i16"><use href="#grefresh"/></svg><svg class="i16"><use href="#props"/></svg><svg class="tri"><use href="#tri"/></svg><svg class="i16"><use href="#edit"/></svg><svg class="tri"><use href="#tri"/></svg><svg class="i16 hb"><use href="#helpb"/></svg><i class="end"></i></div>
              <div class="filters"><span class="l1">Commodity:</span><div class="combo">Electricity<svg><use href="#drop"/></svg></div><span class="l2">Instrument type:</span><div class="combo">Forward<svg><use href="#drop"/></svg></div></div>
              <div class="pg">
                <div class="rows">
                  <div class="pr ph"><span>Field</span><u></u><span>Value</span></div>
                  <div class="pr gh"><span><svg class="mn"><use href="#minus"/></svg>General Data</span></div>
                  <div class="pr"><span>Id</span><svg class="lk"><use href="#lock"/></svg><u></u></div>
                  <div class="pr"><span>Buy/Sell</span><svg><use href="#star"/></svg><u></u></div>
                  <div class="pr"><span>Delivery Type</span><svg><use href="#star"/></svg><u>Financial</u></div>
                  <div class="pr gh"><span><svg class="mn"><use href="#minus"/></svg>Portfolios</span></div>
                  <div class="pr"><span>Portfolio</span><svg><use href="#star"/></svg><u></u></div>
                  <div class="pr"><span>Company</span><svg class="lk"><use href="#lock"/></svg><u></u></div>
                  <div class="pr"><span>Counterparty Portfolio</span><svg><use href="#star"/></svg><u></u></div>
                  <div class="pr"><span>Counterparty Company</span><svg class="lk"><use href="#lock"/></svg><u></u></div>
                  <div class="pr gh"><span><svg class="mn"><use href="#minus"/></svg>Instrument Data</span></div>
                  <div class="pr"><span>Execution Venue</span><svg><use href="#star"/></svg><u>[None]</u></div>
                  <div class="pr"><span>Price Basis</span><svg><use href="#star"/></svg><u>NordPool System Price</u></div>
                  <div class="pr"><span>Reference Price Series</span><i></i><u></u></div>
                  <div class="pr"><span>Period</span><i></i><u></u></div>
                  <div class="pr"><span>From Date</span><svg><use href="#star"/></svg><u></u></div>
                  <div class="pr"><span>To Date</span><svg><use href="#star"/></svg><u></u></div>
                  <div class="pr"><span>Load Profile</span><svg><use href="#star"/></svg><u>Base (System)</u></div>
                  <div class="pr"><span>Time Zone</span><svg><use href="#star"/></svg><u>(UTC+01:00) Central Europe Standard Time</u></div>
                  <div class="pr gh"><span><svg class="mn"><use href="#minus"/></svg>Settlement Data</span></div>
                  <div class="pr"><span>Quantity</span><svg><use href="#star"/></svg><u></u></div>
                  <div class="pr"><span>Quantity Unit</span><svg class="lk"><use href="#lock"/></svg><u class="off">MW</u></div>
                  <div class="pr"><span>Price</span><svg><use href="#star"/></svg><u></u></div>
                  <div class="pr"><span>Currency</span><svg><use href="#star"/></svg><u>EUR</u></div>
                  <div class="pr"><span>Currency Source</span><svg><use href="#star"/></svg><u>Viz</u></div>
                  <div class="pr"><span>Master Agreement</span><i></i><u>[None]</u></div>
                  <div class="pr"><span>Settlement Rule</span><i></i><u>[None]</u></div>
                  <div class="pr"><span>Cash Settlement Period</span><i></i><u class="dis"></u></div>
                </div>
                <div class="sb"><svg><use href="#up"/></svg><div class="thumb t157"></div><svg class="end"><use href="#dn"/></svg></div>
              </div>
              <div class="cstat"></div>
            </div>
          </main>
          <footer class="status"><span class="p1">Connected to ETRM server</span><span class="p2">TEST Environment 17.2</span><span class="p3"><svg class="i16"><use href="#user"/></svg>Vizard</span><div class="monitor"><svg><use href="#mon"/></svg><svg class="blip"><use href="#blip"/></svg></div></footer>
          <div class="task rtask">
            <i class="st"><svg class="w16"><use href="#win"/></svg></i><i class="st"><svg class="w18"><use href="#search"/></svg></i><i class="st"><svg class="w20"><use href="#tview"/></svg></i>
            <i class="e1"><svg><use href="#edge"/></svg></i><i><svg><use href="#folder"/></svg></i><i><svg><use href="#store"/></svg></i><i><svg><use href="#mail"/></svg></i><i class="u"><svg><use href="#appwin"/></svg></i><i class="u d"><svg><use href="#ie"/></svg></i><i class="u on"><svg><use href="#brady"/></svg></i>
            <div class="tray"><svg class="chev"><use href="#chev"/></svg><svg class="i16"><use href="#key"/></svg><svg class="i16"><use href="#net"/></svg><span class="en">ENG</span><div class="clock"><span>08:01</span><span>05/09/2017</span></div><div class="msg"><svg class="i16"><use href="#msg"/></svg><em>2</em></div></div>
          </div>
          <div class="player p-right"><div class="lg"><svg><use href="#te"/></svg></div><div class="btns"><b><i class="sq"></i></b></div></div>
          <div class="tip tip-right"><svg class="tail"><use href="#tail"/></svg><span>Delays the script execution for 2000 milliseconds.</span><div class="bar"><i></i></div><span>DealEntry</span></div>
        </div>
      </div>
    </div>
    <div class="rstatus"><svg class="i16"><use href="#info"/></svg><span>07:47:14 Connected to NETVM-QA172C02</span><div class="rs"><svg class="rb"><use href="#bulb"/></svg><span class="n">1 of 82</span><svg class="l"><use href="#lic"/></svg><span>Standard License</span></div><svg class="gr"><use href="#grip"/></svg></div>
  </div>
</section>
</div>
</body>
</html>
```
FILE: styles.css
```css
* { box-sizing: border-box; }
body { margin: 0; font: 12px/16px "Open Sans", "Noto Sans", sans-serif; letter-spacing: -.38px; color: #111; white-space: nowrap; overflow: hidden; }
svg { display: block; flex: none; }
.sprite { display: none; }
.desk { display: flex; width: 3840px; height: 1200px; }
.screen { position: relative; width: 1920px; height: 1200px; overflow: hidden; }
.left { display: flex; flex-direction: column; }
.i16 { width: 16px; height: 16px; }
.tri { width: 6px; height: 4px; }

/* application frame, shared by the local and the remote desktop */
.title { height: 23px; flex: none; background: #fff; display: flex; align-items: center; padding: 0 16px 0 2px; color: #000; }
.title .logo { width: 16px; height: 16px; }
.cap { margin-left: 5px; }
.dim { color: #999; padding-right: 19px; }
.wc { margin-left: auto; margin-top: -3px; display: flex; gap: 33px; }
.wc svg { width: 12px; height: 12px; }
.menu { height: 24px; flex: none; background: linear-gradient(90deg, #f0f0f0, #fcfcfc); display: grid; grid-template-columns: 52px 70px 55px 83px 71px 93px 63px 40px; align-items: center; padding-left: 16px; color: #000; }
.mdi { flex: 1; background: #ababab; position: relative; overflow: hidden; }
.status { height: 30px; flex: none; background: #f0f0f0; border-top: 1px solid #d0d0d0; border-bottom: 1px solid #a8a8a8; display: flex; align-items: center; padding: 0 20px 0 1px; }
.status > span { height: 24px; border: 1px solid #a0a0a0; border-right-color: #fff; border-bottom-color: #fff; display: flex; align-items: center; padding-left: 5px; margin-right: 2px; color: #000; }
.status .p1 { width: 149px; } .status .p2 { width: 130px; letter-spacing: -.45px; } .status .p3 { width: 57px; padding-left: 0; gap: 3px; }
.monitor { margin-left: auto; width: 72px; height: 25px; background: #000; border: 1px solid #aaa; outline: 1px solid #fff; outline-offset: -2px; padding: 2px 3px; position: relative; }
.monitor svg { width: 64px; height: 20px; }
.monitor .blip { position: absolute; left: 25px; top: 6px; width: 9px; height: 13px; }

/* child windows */
.win { position: absolute; border: 1px solid #333; background: #bcd2ea; box-shadow: inset 0 0 0 1px #fff; padding: 3px; display: flex; flex-direction: column; }
.wtitle { height: 18px; flex: none; display: flex; align-items: center; justify-content: space-between; background: linear-gradient(#98b3d0, #b9d1ea); padding: 0 1px 0 2px; }
.x17 { width: 17px; height: 17px; }
.prices { left: 25px; top: 78px; width: 1119px; height: 422px; box-shadow: inset 1px 1px 0 #fff, inset -1px -1px 0 #62cbea; }
.prices .wtitle span { letter-spacing: -.3px; }
.tools { height: 25px; flex: none; display: flex; align-items: center; background: linear-gradient(#fdfdfd, #efefef); padding-left: 4px; }
.s1 { margin-left: 5px; } .units { width: 86px; margin-left: 10px; } .s2 { margin-left: 7px; }
.sep { width: 1px; height: 15px; background: #b4b4b4; } .sep1 { margin-left: 7px; } .sep2 { margin-left: 5px; }
.combo0 { width: 115px; height: 23px; margin-left: 3px; background: #fff; display: flex; align-items: center; justify-content: space-between; padding: 0 4px 0 4px; }
.az { width: 10px; height: 18px; margin-left: 4px; } .sep3 { margin-left: 15px; } .export { width: 50px; margin-left: 7px; letter-spacing: -.2px; } .s4 { margin-left: 8px; }
.rt { margin-left: auto; display: flex; gap: 7px; padding-right: 5px; }
.gridbox { height: 349px; border: 1px solid #0a2f8c; background: #fff; padding: 2px 3px 2px 2px; display: flex; justify-content: space-between; box-shadow: inset 0 0 0 1px #b9b9b9; }
.table { height: 343px; overflow: hidden; }
.row { display: grid; grid-template-columns: 112px 18px 18px 43px 43px 43px 60px 48px 90px 51px 100px 100px 90px; height: 23px; letter-spacing: -.76px; color: #000; }
.row > span { border-right: 1px dotted #a8a8a8; border-bottom: 1px dotted #a8a8a8; padding-left: 4px; display: flex; align-items: center; }
.row:nth-child(odd) > span { background: #e2e2e2; }
.row > span:nth-child(1), .row > span:nth-child(2) { background: #f0f0f0; }
.row > span:nth-child(1) { font-weight: 700; letter-spacing: -.5px; }
.row > span:nth-child(9) { font-weight: 700; letter-spacing: -.62px; }
.row > span:nth-child(3) { padding: 0 0 0 2px; }
.row.head { letter-spacing: -.36px; height: 24px; }
.row.head > span, .row.head > span:nth-child(1), .row.head > span:nth-child(9) { background: linear-gradient(#fff, #eee); border: 0; border-right: 1px solid #b0b0b0; border-bottom: 2px solid #aaa; padding-left: 5px; font-weight: 400; letter-spacing: -.36px; box-shadow: inset -1px 0 #ddd, inset 1px 0 #fff; }
.row.head > span:nth-child(3) { padding-left: 2px; }
.ck { width: 13px; height: 13px; } .gc { width: 13px; height: 13px; margin: 0 5px 0 -1px; }
.sb { width: 16px; background: #f0f0f0; display: flex; flex-direction: column; align-items: center; padding-top: 6px; }
.sb svg { width: 9px; height: 6px; } .sb .end { margin-top: auto; margin-bottom: 5px; }
.thumb { width: 100%; background: #cdcdcd; margin-top: 5px; } .t114 { height: 114px; } .t157 { height: 157px; } .t346 { height: 346px; }
.sheets { flex: 1; background: linear-gradient(#fff, #c3d8f8); display: flex; position: relative; padding: 3px 0 0 31px; }
.shape { position: absolute; left: 0; top: -1px; width: 162px; height: 20px; }
.sh1, .sh2 { position: relative; width: 70px; }
.cursor { position: absolute; left: 425px; top: 526px; width: 12px; height: 20px; }

/* taskbars */
.task { height: 40px; flex: none; background: #101010; display: flex; color: #fff; }
.task > i { width: 49px; height: 40px; flex: none; display: flex; align-items: center; justify-content: center; }
.task > .st { width: 48px; }
.task > i svg { width: 24px; height: 24px; }
.task > i .w18 { width: 17px; height: 18px; } .task > i .w20 { width: 20px; height: 16px; }
.task > i .w16 { width: 17px; height: 17px; }
.task .u { background: linear-gradient(#8aa5cf, #8aa5cf) 50% 100% / 40px 2px no-repeat; }
.task .d { background: linear-gradient(90deg, #8aa5cf 32px, #5c708f 32px) 50% 100% / 40px 2px no-repeat; }
.task .on { background: linear-gradient(#8aa5cf, #8aa5cf) 50% 100% / 48px 2px no-repeat #333; }
.tray { margin-left: auto; display: flex; align-items: center; padding-right: 7px; border-right: 1px solid #555; margin-right: 4px; gap: 8px; }
.en { width: 21px; } .chev { width: 14px; height: 8px; margin: 3px 1px 0 0; }
.clock { display: flex; flex-direction: column; align-items: center; width: 66px; line-height: 17px; letter-spacing: -.65px; margin-left: 2px; }
.rtask { background: #000308; }
.rtask .e1 { margin-left: 2px; }
.rtask .u { background-image: linear-gradient(#76b4ea, #76b4ea); }
.rtask .d { background-image: linear-gradient(90deg, #76b4ea 32px, #5580a8 32px); }
.rtask .tray { gap: 0; margin-right: 5px; padding-right: 20px; }
.rtask .chev { width: 13px; margin-right: 10px; } .rtask .i16 { margin-right: 8px; } .rtask .en { width: 27px; margin-left: 3px; } .rtask .clock { margin-left: 5px; width: 66px; }
.msg { position: relative; margin-left: 14px; width: 16px; height: 16px; } .rtask .msg .i16 { margin: 0; }
.msg em { position: absolute; left: 7px; top: 6px; width: 16px; height: 16px; border-radius: 8px; background: #333; border: 1px solid #888; font: 700 11px/14px "Open Sans", sans-serif; text-align: center; }

/* playback controls floating over the app */
.player { position: absolute; height: 40px; border: 2px solid #a5a29e; border-radius: 5px; background: #d0cfcd; display: flex; overflow: hidden; }
.p-left { left: 1799px; top: 24px; width: 103px; } .p-right { right: 20px; top: 24px; width: 78px; }
.lg { width: 39px; display: flex; align-items: center; justify-content: center; background: linear-gradient(135deg, #eee, #c4c4c4); }
.lg svg { width: 32px; height: 32px; }
.btns { flex: 1; background: #171717; display: flex; align-items: center; justify-content: center; gap: 3px; border-right: 1px solid #fff; border-bottom: 1px solid #fff; }
.btns b { width: 22px; height: 22px; border-radius: 3px; background: linear-gradient(#efedea, #b5afa6); border: 1px solid #fff; display: flex; align-items: center; justify-content: center; }
.sq { width: 8px; height: 8px; background: #4c4844; } .pause { width: 8px; height: 8px; border: solid #4c4844; border-width: 0 3px; }
.tip { position: absolute; background: #fff; border: 1px solid #666; font: 11px/16px "DejaVu Sans Condensed", "DejaVu Sans", sans-serif; letter-spacing: 0; color: #000; text-align: right; }
.tip span { display: block; }
.tip-left { left: 1758px; top: 68px; width: 144px; height: 43px; padding: 2px 6px 0 3px; }
.tip-left hr { margin: 1px -3px 0 0; border: 0; border-top: 1px solid #000; }
.tip-right { right: 20px; top: 68px; width: 272px; height: 52px; padding: 2px 7px 0 3px; letter-spacing: -.33px; }
.bar { height: 10px; margin: 1px -4px 0 0; background: #e6e6e6; border: 1px solid #b8b8b8; padding: 2px; }
.bar i { display: block; width: 119px; height: 4px; background: repeating-linear-gradient(90deg, #06b025 0 4px, #e6e6e6 4px 5px); }
.tail { position: absolute; right: 3px; top: -8px; width: 10px; height: 8px; }

/* second monitor */
.right { background:
  linear-gradient(90deg, #6f6a2c, #76713a 12%, #6a6a28 35%, #5d6a24 55%, #6a6436 75%, #5f5b20 88%, #4c4c15) 0 100% / 100% 60px no-repeat,
  linear-gradient(#3c4a10, #454a12 35%, #58561b 65%, #44551a 85%, #4f5016) 100% 0 / 60px 100% no-repeat,
  linear-gradient(90deg, #6c6733, #8a8145 10%, #746c2d 22%, #6f6f30 35%, #857a3c 50%, #687036 57%, #546426 70%, #5f5c1a 80%, #414d10); }
.sticky { position: absolute; left: 1526px; top: 25px; width: 366px; height: 1068px; background: linear-gradient(#f8f5ae 28px, #fdfcc6 28px, #fcf79e); box-shadow: 1px 2px 4px rgba(0,0,0,.5); }
.sticky svg { position: absolute; right: 3px; bottom: 3px; width: 8px; height: 8px; }
.royal { position: absolute; left: 23px; top: 28px; width: 1846px; height: 1133px; background: #f4f4f4; border: 1px solid #5a5762; display: flex; flex-direction: column; color: #444; }
.rtitle { height: 31px; flex: none; display: flex; }
.qat { width: 422px; display: flex; align-items: center; padding-left: 5px; gap: 11px; }
.qd { width: 6px; height: 6px; margin-left: 8px; }
.ctx { width: 168px; background: #eff8e1; border-top: 4px solid #a6d144; line-height: 24px; text-align: center; color: #666; }
.rcap { width: 460px; padding-left: 229px; color: #8c8c8c; line-height: 31px; letter-spacing: -.13px; }
.rwc { margin-left: auto; display: flex; align-items: center; gap: 18.500px; padding-right: 13px; }
.rwc svg { width: 12px; height: 12px; }
.rtabs { height: 24px; flex: none; border-bottom: 1px solid #c8c8c8; display: grid; grid-template-columns: 73px 61px 50px 90px 54px 53px 41px 76px 92px 1fr; align-items: center; line-height: 23px; letter-spacing: -.3px; }
.rtabs .file { background: #874e00; color: #fff; width: 57px; padding-left: 18px; }
.act { border: 1px solid #c8c8c8; border-bottom: 0; height: 24px; background: #f4f4f4; color: #945600; padding-left: 12px; }
.ctxb { background: #eff8e1; height: 23px; }
.hq { justify-self: end; margin-right: 6px; }
.ribbon { height: 99px; flex: none; border-bottom: 1px solid #c8c8c8; display: flex; padding: 6px 0; position: relative; letter-spacing: -.35px; }
.grp { border-right: 1px solid #d4d4d4; display: flex; flex-direction: column; align-items: center; justify-content: space-between; height: 87px; }
.g1 { width: 282px; } .g2 { width: 257px; } .g3 { width: 261px; } .g4 { width: 122px; } .g5 { width: 117px; } .g6 { width: 280px; } .g7 { width: 135px; }
.grp label { line-height: 14px; margin-bottom: -2px; }
.big { display: flex; width: 100%; }
.big a { display: flex; flex-direction: column; align-items: center; flex: none; line-height: 15px; }
.big a > svg { width: 32px; height: 32px; margin-bottom: 4px; }
.big a span { display: flex; align-items: center; height: 15px; }
.big .wide { letter-spacing: -.1px; }
.w34 { width: 34px; } .w42 { width: 42px; } .w53 { width: 53px; } .w54 { width: 54px; } .w60 { width: 60px; } .w62 { width: 62px; } .w66 { width: 66px; } .w67 { width: 67px; } .w74 { width: 74px; } .w82 { width: 82px; } .w84 { width: 84px; } .w86 { width: 86px; } .w104 { width: 104px; } .w116 { width: 116px; }
.dt { width: 5px; height: 3px; margin-left: 5px; } .dt.solo { margin: 0; }
.cols { display: flex; width: 100%; }
.c1, .c2 { display: flex; flex-direction: column; justify-content: space-between; height: 62px; margin-top: 1px; }
.c1 { width: 99px; border-right: 1px solid #d4d4d4; padding-left: 10px; } .c2 { padding-left: 9px; }
.c1 span, .c2 span { display: flex; align-items: center; gap: 5px; } .c2 .dt { margin-left: 0; } .c2 span { gap: 6px; }
.off { color: #999; }
.collapse { position: absolute; right: 10px; bottom: 10px; width: 10px; height: 6px; }
.body { flex: 1; min-height: 0; display: flex; gap: 5px; padding: 2px 1px 2px 1px; }
.nav { width: 262px; border: 1px solid #999; height: 950px; display: flex; flex-direction: column; }
.nh { height: 43px; flex: none; display: flex; align-items: center; padding: 0 13px 6px 9px; }
.nh b { font-weight: 400; font-size: 15px; margin-left: 3px; letter-spacing: -.35px; }
.pn { width: 9px; height: 11px; margin-left: auto; } .nx { width: 9px; height: 9px; margin-left: 14px; }
.ns { height: 22px; flex: none; display: flex; align-items: center; padding-left: 9px; }
.box { width: 188px; height: 22px; border: 1px solid #a0a0a0; display: flex; align-items: center; justify-content: space-between; padding: 0 3px 0 4px; color: #888; letter-spacing: -.3px; }
.box svg { width: 12px; height: 12px; }
.bl { width: 12px; height: 16px; margin-left: 13px; } .b2 { margin-left: 16px; }
.treebox { flex: 1; min-height: 0; margin-top: 5px; display: flex; justify-content: space-between; overflow: hidden; }
.tree { margin-top: -16px; width: 243px; }
.tree p { margin: 0; height: 22px; display: flex; align-items: center; padding-left: 57px; gap: 6px; letter-spacing: -.36px; color: #333; }
.tree .f { padding-left: 28px; gap: 5px; } .ex { width: 6px; height: 6px; }
.sel em { font-style: normal; background: #ece4da; line-height: 20px; margin-left: -3px; padding: 0 5px 0 3px; }
.tsb { width: 17px; background: #e6e6e6; } .tsb .thumb { background: #c4c4c4; margin-top: 20px; }
.docs { flex: 1; display: flex; flex-direction: column; min-width: 0; }
.dtabs { height: 28px; flex: none; border-bottom: 2px solid #7f847f; display: flex; align-items: flex-end; color: #666; }
.dtabs span { display: flex; align-items: center; height: 24px; gap: 5px; border: 1px solid #a0a0a0; border-bottom: 0; background: #dedede; padding-left: 9px; }
.dtabs .d1 { width: 119px; } .dtabs .d2 { width: 147px; border-left: 0; padding-left: 10px; gap: 3px; } .dtabs .d3 { width: 167px; height: 26px; background: #4d4d4d; color: #fff; border: 0; font-weight: 700; gap: 4px; padding: 0 10px 0 11px; letter-spacing: -.75px; }
.dx { width: 8px; height: 8px; margin-left: auto; }
.dd { width: 8px; height: 5px; margin: 0 7px 12px auto; color: #666; }
.remote { position: relative; height: 922px; flex: none; display: flex; flex-direction: column; border-right: 2px solid #111; border-bottom: 1px solid #888; color: #111; }
.remote .title { padding-right: 19px; } .remote .wc { margin-top: -1px; }
.wm { position: absolute; right: 67px; top: 773px; font-size: 16px; line-height: 22px; letter-spacing: 0; color: #a4a4a4; }

/* contract editor */
.contract { left: 25px; top: 78px; width: 572px; height: 666px; background: #d6e4f2; border-color: #444; }
.contract .wtitle { background: linear-gradient(#becddb, #d7e4f2); }
.ctools { height: 25px; flex: none; display: flex; align-items: center; background: linear-gradient(90deg, #fafafa, #fff); padding-left: 6px; }
.ctools .i16 { margin-left: 7px; } .ctools .tri { margin-left: 6px; } .ctools .grip + .i16 { margin-left: 6px; } .ctools .tri + .i16 { margin-left: 5px; } .ctools .tri + .hb { margin-left: 7px; }
.grip { width: 3px; height: 15px; background: repeating-linear-gradient(#bbb 0 2px, transparent 2px 4px); }
.ctools .end { width: 1px; height: 18px; background: #bbb; margin-left: 6px; }
.filters { height: 40px; flex: none; background: #f0f0f0; display: flex; align-items: center; padding-left: 19px; color: #111; }
.l1 { width: 101px; } .l2 { width: 104px; margin-left: 10px; }
.combo { width: 158px; height: 23px; background: #e1e1e1; border: 1px solid #adadad; display: flex; align-items: center; justify-content: space-between; padding: 0 4px; }
.combo svg { width: 9px; height: 6px; }
.pg { height: 550px; flex: none; background: #f0f0f0; border: solid #f0f0f0; border-width: 0 12px 0 12px; display: flex; box-shadow: inset 1px 1px #777, inset -1px -1px #e0e0e0; padding: 1px; }
.rows { width: 521px; overflow: hidden; height: 548px; color: #111; }
.pr { height: 20px; display: grid; grid-template-columns: 185px 16px 319px; align-items: center; letter-spacing: -.32px; }
.pr > span { padding-left: 21px; height: 20px; line-height: 20px; background: linear-gradient(#aaa, #aaa) 8px 50% / 5px 1px no-repeat, repeating-linear-gradient(#aaa 0 1px, transparent 1px 2px) 7px 0 / 1px 100% no-repeat; }
.pr > u { text-decoration: none; background: #fff; height: 19px; line-height: 19px; padding-left: 7px; color: #111; }
.pr > u.off { color: #8a8a8a; } .pr > u.dis { background: #e8e8e8; border: 1px solid #aaa; }
.pr > svg { width: 9px; height: 9px; margin-left: 2px; } .pr > .lk { width: 12px; height: 13px; margin-left: 0; }
.pr.ph > span { background: none; padding-left: 7px; } .pr.ph > u { background: none; }
.pr.gh > span { font-weight: 700; background: none; display: flex; align-items: center; padding-left: 3px; gap: 9px; letter-spacing: -.28px; }
.mn { width: 9px; height: 9px; }
.cstat { flex: 1; background: #f0f0f0; border-right: 13px solid #f0f0f0; border-top: 2px solid #e0e0e0; box-shadow: inset -1px 0 #d0d0d0; }

.rstatus { height: 23px; flex: none; background: #874e00; color: #fff; display: flex; align-items: center; padding: 0 3px 0 7px; gap: 5px; letter-spacing: -.3px; }
.rs { margin-left: auto; display: flex; align-items: center; margin-right: 26px; }
.rs .rb { width: 11px; height: 15px; } .rs .n { width: 46px; margin-left: 9px; letter-spacing: 0; } .rs .l { width: 13px; height: 15px; margin: 0 7px 0 1px; }
.gr { width: 8px; height: 8px; align-self: flex-end; margin-bottom: 2px; }
```
